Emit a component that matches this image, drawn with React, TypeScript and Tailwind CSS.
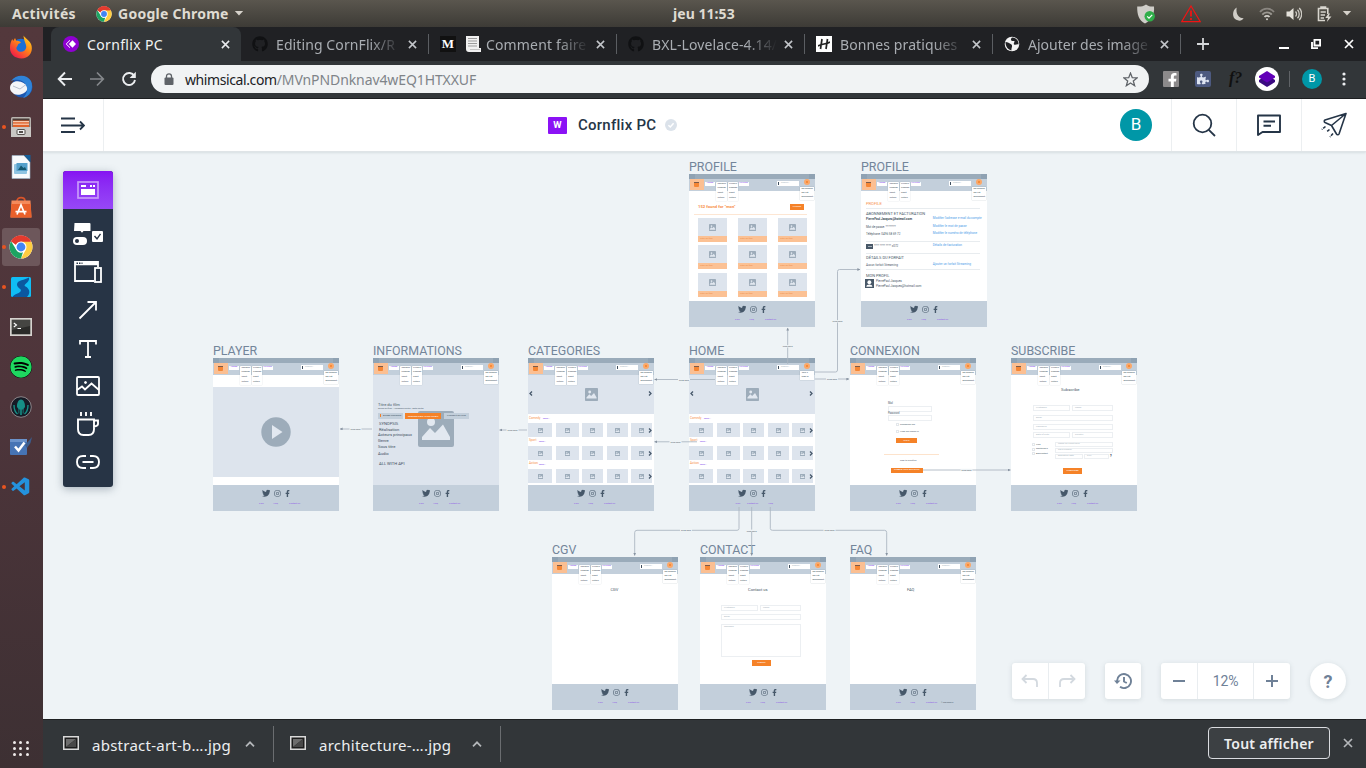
import React from "react";
import { FaTwitter, FaInstagram, FaFacebookF, FaGithub, FaSpotify, FaPuzzlePiece } from "react-icons/fa";
import { VscVscode } from "react-icons/vsc";

const ubuntu = "font-['Noto_Sans','Open_Sans',sans-serif]";
const din = "font-['Roboto',sans-serif]";

/* ---------- shared icons ---------- */

function ChromeLogo({ className }: { className: string }) {
  return (
    <svg viewBox="0 0 48 48" className={className}>
      <circle cx="24" cy="24" r="23" fill="#fff" />
      <path d="M24 24 L4.1 12.5 A23 23 0 0 1 43.9 12.5 Z" fill="#e33b2e" />
      <path d="M24 13 H44.2 A23 23 0 0 1 24 47 L33.5 29.5 Z" fill="#ffcd40" />
      <path d="M4.1 12.5 L14.5 29.5 A11 11 0 0 0 28 34 L24 47 A23 23 0 0 1 4.1 12.5Z" fill="#1da462" />
      <path d="M4.1 12.5 A23 23 0 0 1 44.2 13 H24 A11 11 0 0 0 14 20 Z" fill="#e33b2e" />
      <circle cx="24" cy="24" r="11" fill="#fff" />
      <circle cx="24" cy="24" r="8.8" fill="#4285f4" />
    </svg>
  );
}

function Cross({ className }: { className: string }) {
  return (
    <svg viewBox="0 0 10 10" className={className} fill="none" stroke="currentColor" strokeWidth="1.7">
      <path d="M1 1 L9 9 M9 1 L1 9" />
    </svg>
  );
}

function Caret() {
  return (
    <svg viewBox="0 0 10 6" className="h-[5px] w-[10px]" fill="#d6d2cb">
      <path d="M0 0H10L5 5.5Z" />
    </svg>
  );
}

/* ---------- desktop chrome ---------- */

function TopBar() {
  return (
    <div className={`relative flex h-[27px] shrink-0 items-center bg-linear-to-b from-[#5a564e] to-[#3d3b36] text-[14px] font-bold text-[#dfdbd2] ${ubuntu}`}>
      <span className="w-[64px] pl-3 whitespace-nowrap tracking-[0.35px]">Activités</span>
      <ChromeLogo className="ml-[32px] h-4 w-4" />
      <span className="ml-[6px] w-[116px] whitespace-nowrap tracking-[0.25px]">Google Chrome</span>
      <Caret />
      <span className="absolute top-[3px] left-[673px] whitespace-nowrap tracking-[0.05px]">jeu 11:53</span>
      <div className="ml-auto flex items-center">
        <svg viewBox="0 0 20 20" className="mr-[25px] h-5 w-5">
          <path d="M10 0.5 C7 2.5 4 2.8 1.2 2.5 C1 11 3 16.5 9 19.5 C15 16.5 18.8 11 18 2.5 C15 2.8 13 2.5 10 0.5Z" fill="#cfcdc8" />
          <circle cx="13.7" cy="12.3" r="5.2" fill="#2fae49" />
          <path d="M11.2 12.3 L13 14.1 L16.2 10.8" fill="none" stroke="#fff" strokeWidth="1.2" />
        </svg>
        <svg viewBox="0 0 20 18" className="mr-[31px] h-[18px] w-5" fill="none" stroke="#f01414">
          <path d="M10 1 L19.3 16.7 H0.7 Z" strokeWidth="1.2" />
          <path d="M10 5.5 V11.5 M10 13 V15" strokeWidth="1.8" />
        </svg>
        <svg viewBox="0 0 14 16" className="mr-[14px] h-4 w-[13px]" fill="#d0cdc7">
          <path d="M5 1 C0 4 0 12 4.5 14.3 C8 16 11 15 12.5 12.5 C7 12.5 4 8 5 1Z" />
        </svg>
        <svg viewBox="0 0 16 14" className="mr-[11px] h-[14px] w-4" fill="none" stroke="#d0cdc7" strokeWidth="1.8">
          <path d="M1 5 A9 9 0 0 1 15 5" opacity=".45" />
          <path d="M3.3 7.6 A6 6 0 0 1 12.7 7.6" opacity=".6" />
          <path d="M5.5 10 A3.3 3.3 0 0 1 10.5 10" />
          <circle cx="8" cy="12.3" r="1" fill="#d0cdc7" stroke="none" />
        </svg>
        <svg viewBox="0 0 16 14" className="mr-[15px] h-[14px] w-4">
          <path d="M0.5 4.5 H3.5 L7.5 1 V13 L3.5 9.5 H0.5Z" fill="#e4e1da" />
          <path d="M9.5 4.5 A3.5 3.5 0 0 1 9.5 9.5 M11.5 2.8 A6 6 0 0 1 11.5 11.2 M13.2 1 A8.5 8.5 0 0 1 13.2 13" fill="none" stroke="#cfccc5" strokeWidth="1.3" />
        </svg>
        <svg viewBox="0 0 15 16" className="mr-[10px] h-4 w-[15px]" fill="none" stroke="#d8d5ce" strokeWidth="1.6">
          <path d="M8 14.5 H1.5 V2.5 H10.8 V8 M4 2.5 V1 H8.5 V2.5 M3.6 6 H8.8 M3.6 9 H8 M3.6 12 H7" />
          <path d="M11.5 7.5 L8.3 12 H11 L9.8 16 L14.5 10.6 H11.6 L13 7.5Z" fill="#d8d5ce" stroke="none" />
        </svg>
        <div className="mr-[14px]"><Caret /></div>
      </div>
    </div>
  );
}

function Firefox() {
  return (
    <svg viewBox="0 0 24 24" className="h-6 w-6">
      <defs>
        <linearGradient id="ffx" x1="1" y1="0" x2="0.2" y2="1">
          <stop offset="0" stopColor="#ffe226" />
          <stop offset=".45" stopColor="#ff8a16" />
          <stop offset="1" stopColor="#f0134d" />
        </linearGradient>
      </defs>
      <circle cx="12" cy="12.3" r="8.5" fill="#1a6fd6" />
      <path d="M14.5 .5 C16 3 20 5 22 9 C24.5 15 21.5 23.3 12.5 23.5 C5 23.5 .7 18.5 1 12.5 C1 9 2 6 3.3 4 L4.2 6 L6 3 L7.5 6 C9 5.5 10.5 6.2 12 7.2 C11 8.5 9.8 8.2 9 9.5 C8.7 11.5 6.8 12.2 7.5 14 C9.5 18.5 16.5 17.5 17.2 12.5 C17.6 9 15 7 14.5 .5Z" fill="url(#ffx)" />
    </svg>
  );
}

function Thunderbird() {
  return (
    <svg viewBox="0 0 24 24" className="h-6 w-6">
      <circle cx="13" cy="12" r="10.5" fill="#1c57b0" />
      <path d="M2 6 C7 -1 18 -1 22 6 C25 13 21 22 14 23 C20 18 19 9 13 6 C9 4 5 5 2 6Z" fill="#2f83d8" />
      <path d="M1 13 C1 8 6 5.5 10 6.5 C15 7 19 11 18 15 C16 19 9 21 5 19 C3 17 1 16 1 13Z" fill="#f4f5f8" />
      <path d="M4 11 L11 14 L17 9.5" fill="none" stroke="#b9c1cf" strokeWidth="1" />
    </svg>
  );
}

function Files() {
  return (
    <svg viewBox="0 0 22 22" className="h-[22px] w-[22px]">
      <rect x="1" y="1" width="20" height="20" rx="1.5" fill="#b9b5b0" />
      <rect x="2.5" y="2.5" width="17" height="9" fill="#4b3d38" />
      <path d="M3 4.5 H19 V11 H3Z" fill="#e0622a" />
      <path d="M3 5.7 H19 M3 8.2 H19" stroke="#fbe3cf" strokeWidth="1" />
      <rect x="1" y="11" width="20" height="10" fill="#c9c7c4" />
      <rect x="7" y="13.5" width="8" height="5" rx="1" fill="#eee" stroke="#55504d" strokeWidth="1" />
      <rect x="9" y="15" width="4" height="2" fill="#55504d" />
    </svg>
  );
}

function Writer() {
  return (
    <svg viewBox="0 0 20 24" className="h-6 w-5">
      <path d="M1 .5 H13 L19 7 V23.5 H1Z" fill="#f7fafc" stroke="#9bb6c9" strokeWidth=".6" />
      <path d="M13 0 H19.5 V7.5Z" fill="#16609a" />
      <rect x="3" y="9" width="13" height="10" rx="1" fill="#8fc4e2" />
      <rect x="5.5" y="8" width="11" height="8" fill="#54a0cb" />
      <path d="M7 15 L10 10.5 L12.5 13 L14 12 L15.5 15Z" fill="#14576f" />
    </svg>
  );
}

function SoftwareCenter() {
  return (
    <svg viewBox="0 0 22 22" className="h-[22px] w-[22px]">
      <path d="M7 5 C7 .5 15 .5 15 5" fill="none" stroke="#d8542a" strokeWidth="1.6" />
      <path d="M1.5 4.5 H20.5 L21.5 21.5 H.5Z" fill="#f58a5b" />
      <path d="M1.4 8 L.5 21.5 H21.5 L20.6 8 Z" fill="#e9602b" />
      <path d="M7 18.5 L11 9 L15 18.5 M5.5 15.7 H16.5" fill="none" stroke="#fff" strokeWidth="1.7" />
    </svg>
  );
}

function River() {
  return (
    <svg viewBox="0 0 20 20" className="h-5 w-5">
      <rect width="20" height="20" rx="1.5" fill="#10bdf5" />
      <path d="M18 .5 C14 3 6 3 6 7.500 C6 11.500 11.500 11.500 9.500 14.500 C7.500 17 3 17 1.500 20 H16 C20 16 18.500 11.500 14.500 9.500 C11 7.500 19 6 18 .5Z" fill="#0b57a0" />
    </svg>
  );
}

function Terminal() {
  return (
    <svg viewBox="0 0 22 18" className="h-[18px] w-[22px]">
      <rect width="22" height="18" fill="#d6d3cf" />
      <rect x="1.7" y="1.7" width="18.6" height="14.6" fill="#2b2b29" />
      <path d="M2 2H20V8L2 12Z" fill="#454542" />
      <path d="M3.8 5 L6.5 7 L3.8 9 M7.5 10.5 H11" fill="none" stroke="#fff" strokeWidth="1.1" />
    </svg>
  );
}

function Kraken() {
  return (
    <svg viewBox="0 0 22 22" className="h-[22px] w-[22px]">
      <circle cx="11" cy="11" r="10.3" fill="#161b26" stroke="#8b8488" strokeWidth="1" />
      <path d="M11 3.5 C14 3.5 15.3 8 15 11 L13.5 13 V17.5 H12.7 V13.5 H11.8 V19 H10.2 V13.5 H9.3 V17.5 H8.5 V13 L7 11 C6.7 8 8 3.5 11 3.5Z" fill="#168f86" />
      <path d="M4 9 C4 13 5 16 7.5 18 M18 9 C18 13 17 16 14.5 18" fill="none" stroke="#168f86" strokeWidth="1.4" />
    </svg>
  );
}

function Tasks() {
  return (
    <svg viewBox="0 0 24 22" className="h-[22px] w-6">
      <rect x="1" y="3" width="17" height="16" rx="1" fill="#4674b5" />
      <rect x="1" y="3" width="17" height="3" fill="#6b93cb" />
      <path d="M16 9 L23 1 L21.5 7 L18 12Z" fill="#3c5c8c" />
      <path d="M6 10.5 L9.5 14.5 L15.5 6.5" fill="none" stroke="#fff" strokeWidth="2.5" />
    </svg>
  );
}

const dock: { node: React.ReactNode; running?: boolean; active?: boolean }[] = [
  { node: <Firefox /> },
  { node: <Thunderbird /> },
  { node: <Files />, running: true },
  { node: <Writer /> },
  { node: <SoftwareCenter /> },
  { node: <ChromeLogo className="h-6 w-6" />, running: true, active: true },
  { node: <River />, running: true },
  { node: <Terminal /> },
  { node: <FaSpotify className="h-[22px] w-[22px] rounded-full bg-black text-[#1ed760]" /> },
  { node: <Kraken /> },
  { node: <Tasks /> },
  { node: <VscVscode className="h-[22px] w-[22px] text-[#2492dd]" />, running: true },
];

function Dock() {
  return (
    <aside className="flex w-[43px] shrink-0 flex-col bg-linear-to-b from-[#53383c] via-[#4e353b] to-[#3d3033]">
      {dock.map((d, i) => (
        <div key={i} className="relative flex h-10 items-center pl-[2px]">
          {d.running && <span className="absolute left-[2px] z-10 h-[4px] w-[4px] rounded-full bg-[#e95420]" />}
          <div className={`flex h-[38px] w-[38px] items-center justify-center rounded-[3px] ${d.active ? "bg-[#6d575b]" : ""}`}>{d.node}</div>
        </div>
      ))}
      <div className="mt-auto mb-[12px] ml-[13px] grid w-4 grid-cols-3 gap-[3px]">
        {Array.from({ length: 9 }, (_, i) => (
          <span key={i} className="h-[3px] w-[3px] rounded-full bg-[#efeaea]" />
        ))}
      </div>
    </aside>
  );
}

/* ---------- browser chrome ---------- */

const fade = "[mask-image:linear-gradient(to_right,black_75%,transparent)]";

const Github = () => <FaGithub className="h-4 w-4 text-[#101113]" />;

const tabs: { icon: React.ReactNode; title: React.ReactNode; tracking: string }[] = [
  { icon: <Github />, title: "Editing CornFlix/R", tracking: "tracking-[0.1px]" },
  {
    icon: <span className="flex h-4 w-4 items-center justify-center bg-[#111] font-['Liberation_Serif',serif] text-[13px] font-bold text-white">M</span>,
    title: (
      <span className="flex items-center">
        <svg viewBox="0 0 16 16" className="mr-[5px] ml-[1px] h-4 w-4 shrink-0">
          <path d="M1 0 H14 V12 H16 V16 H4 C2 16 1 15 1 13Z" fill="#f0f0f0" />
          <path d="M3 2.5 H12 M3 5 H12 M3 7.5 H12 M3 10 H12" stroke="#9b9b9b" strokeWidth="1" />
          <path d="M5 13.5 H15" stroke="#c4c4c4" />
        </svg>
        Comment faire
      </span>
    ),
    tracking: "tracking-[0.15px]",
  },
  { icon: <Github />, title: "BXL-Lovelace-4.14/", tracking: "tracking-[0.1px]" },
  {
    icon: (
      <span className="flex h-4 w-4 items-center justify-center bg-white">
        <svg viewBox="0 0 12 12" className="h-3 w-3" fill="none" stroke="#222" strokeWidth="1.7">
          <path d="M4 1 L2.5 11 M9.5 1 L8 11 M0 8 C5 5 7 7 12 4" />
        </svg>
      </span>
    ),
    title: "Bonnes pratiques",
    tracking: "tracking-[0.1px]",
  },
  {
    icon: (
      <svg viewBox="0 0 16 16" className="h-4 w-4">
        <circle cx="8" cy="8" r="7.3" fill="#f4f4f4" />
        <path d="M1.5 6 C4 6 5 7 7.500 8.500 C9 10 7 12 7.500 14.500 C3.500 13.500 1.500 10 1.5 6Z M8 1.500 C6 3.500 7 5 9.500 5 C12 5 9 7 10 8.500 C12 9.500 13 7.500 14.500 8.500 C15 5 12 1.500 8 1.500Z" fill="#202124" />
      </svg>
    ),
    title: "Ajouter des image",
    tracking: "tracking-[0px]",
  },
];

function TabStrip() {
  return (
    <div className={`flex h-[34px] shrink-0 bg-[#202124] text-[14px] ${ubuntu}`}>
      <div className="ml-2 flex w-[190px] items-center rounded-t-[8px] bg-[#323639] pr-[11px] pl-3">
        <svg viewBox="0 0 16 16" className="h-4 w-4">
          <circle cx="8" cy="8" r="8" fill="#8f00d2" />
          <path d="M9.5 4.2 L13 8 L9.5 11.8 L5.8 8Z" fill="#fff" />
          <path d="M7 4.3 L3.2 8 L7 11.7" fill="none" stroke="#fff" strokeWidth="1" />
        </svg>
        <span className="ml-2 flex-1 whitespace-nowrap text-[#f1f3f4] tracking-[0.35px]">Cornflix PC</span>
        <Cross className="h-[9px] w-[9px] text-[#e8eaed]" />
      </div>
      {tabs.map((t, i) => (
        <div key={i} className="flex w-[188px] items-center pl-[11px]">
          <span className="shrink-0">{t.icon}</span>
          <span className={`ml-2 w-[125px] whitespace-nowrap text-[#a9adb2] ${t.tracking} ${fade}`}>{t.title}</span>
          <Cross className="ml-[7px] h-[9px] w-[9px] shrink-0 text-[#c3c6ca]" />
          <span className="ml-auto h-5 w-px bg-[#5b5e62]" />
        </div>
      ))}
      <div className="flex flex-1 items-center pr-[12px] pl-[16px] text-[#d5d7da]">
        <svg viewBox="0 0 12 12" className="h-3 w-3" stroke="currentColor" strokeWidth="1.8"><path d="M6 0V12M0 6H12" /></svg>
        <svg viewBox="0 0 10 10" className="ml-auto h-[10px] w-[10px]"><path d="M0 9H10" stroke="#fff" strokeWidth="2" /></svg>
        <svg viewBox="0 0 10 10" className="ml-[22px] h-[10px] w-[10px]" fill="none" stroke="#fff" strokeWidth="1.9">
          <path d="M3.5 .9 H9.1 V6.5 H3.5Z M1 3 V9.1 H7" />
        </svg>
        <Cross className="ml-[23px] h-[10px] w-[10px] text-white" />
      </div>
    </div>
  );
}

function AddressBar() {
  return (
    <div className={`flex h-[38px] shrink-0 items-center border-b border-[#1e2022] bg-[#323639] pb-[1px] ${ubuntu}`}>
      <svg viewBox="0 0 16 16" className="ml-[14px] h-4 w-4" fill="none" stroke="#eceef0" strokeWidth="1.9"><path d="M15 8H2M8 1.5L1.7 8L8 14.5" /></svg>
      <svg viewBox="0 0 16 16" className="ml-[16px] h-4 w-4" fill="none" stroke="#85888c" strokeWidth="1.7"><path d="M1 8H14M8 1.5L14.3 8L8 14.5" /></svg>
      <svg viewBox="0 0 16 16" className="ml-[16px] h-4 w-4" fill="none" stroke="#eceef0" strokeWidth="1.9">
        <path d="M13.3 5 A6 6 0 1 0 14 9" />
        <path d="M14.8 .8 V7 H8.6Z" fill="#eceef0" stroke="none" />
      </svg>
      <div className="ml-[14px] flex h-7 w-[998px] items-center rounded-full bg-[#f1f3f4] text-[14px]">
        <svg viewBox="0 0 10 12" className="ml-[13px] h-3 w-[10px]">
          <rect x=".5" y="4.5" width="9" height="7.5" rx="1" fill="#5f6368" />
          <path d="M2.5 5 V3.3 A2.5 2.5 0 0 1 7.5 3.3 V5" fill="none" stroke="#5f6368" strokeWidth="1.3" />
        </svg>
        <span className="ml-[11px] whitespace-nowrap text-[#7f8489] tracking-[-0.1px]"><span className="text-[#202124] tracking-[-0.4px]">whimsical.com</span>/MVnPNDnknav4wEQ1HTXXUF</span>
        <svg viewBox="0 0 16 16" className="mr-[11px] ml-auto h-[15px] w-[15px]" fill="none" stroke="#5f6368" strokeWidth="1.4">
          <path d="M8 1.2 L9.9 6 L15 6.3 L11 9.6 L12.4 14.6 L8 11.8 L3.6 14.6 L5 9.6 L1 6.3 L6.1 6Z" />
        </svg>
      </div>
      <span className="relative ml-[14px] flex h-4 w-4 justify-end overflow-hidden rounded-[1px] bg-[#8c8a8b]"><FaFacebookF className="mt-[2px] mr-[1px] h-[15px] w-[11px] text-white" /></span>
      <span className="ml-4 flex h-4 w-4 items-center justify-center rounded-[2px] bg-[#4d5a80]"><FaPuzzlePiece className="h-3 w-3 text-[#dfe5f2]" /></span>
      <span className="ml-[18px] w-[14px] pb-[2px] font-['Liberation_Serif',serif] text-[16px] leading-none font-bold whitespace-nowrap text-[#101010] italic">f?</span>
      <span className="ml-[12px] flex h-6 w-6 items-center justify-center rounded-full bg-white">
        <svg viewBox="0 0 16 16" className="h-4 w-4"><path d="M0 9 L8 4 L16 9 V11 L8 16 L0 11Z" fill="#3a0a80" /><path d="M8 0 L16 5 V6.5 L8 11.5 L0 6.5 V5Z" fill="#6200b8" /></svg>
      </span>
      <span className="ml-[10px] h-4 w-px bg-[#606367]" />
      <span className={`ml-3 flex h-5 w-5 items-center justify-center rounded-full bg-[#0097a7] text-[11px] text-white ${din}`}>B</span>
      <svg viewBox="0 0 4 14" className="ml-[20px] h-[14px] w-1" fill="#eceef0"><circle cx="2" cy="2" r="1.6" /><circle cx="2" cy="7" r="1.6" /><circle cx="2" cy="12" r="1.6" /></svg>
    </div>
  );
}

/* ---------- whiteboard header ---------- */

function HeaderCell({ children }: { children: React.ReactNode }) {
  return <div className="flex h-full w-[65px] items-center justify-center border-l border-[#eceff1]">{children}</div>;
}

function AppHeader() {
  return (
    <header className="relative z-10 flex h-[53px] shrink-0 items-center border-b border-[#dfe4e7] bg-white shadow-[0_1px_2px_rgba(60,80,90,0.12)]">
      <div className="flex h-full w-[61px] items-center border-r border-[#eceff1] pl-[18px]">
        <svg viewBox="0 0 24 16" className="h-4 w-6" fill="none" stroke="#253547" strokeWidth="1.8"><path d="M0 1.500H14M0 8.500H23M0 15H14M19 4.500L23 8.500L19 12.500" /></svg>
      </div>
      <div className="flex flex-1 items-center pl-[444px]">
        <span className={`flex h-[17px] w-[19px] items-center justify-center rounded-[1px] bg-[#8b12f5] text-[9.5px] font-bold text-white ${din}`}>W</span>
        <span className={`ml-[11px] w-[79px] text-[15px] font-medium whitespace-nowrap text-[#253547] tracking-[0.25px] ${din}`}>Cornflix PC</span>
        <svg viewBox="0 0 12 12" className="ml-[8px] h-3 w-3"><circle cx="6" cy="6" r="6" fill="#dbe2ea" /><path d="M3.4 6.2 L5.3 8 L8.6 4.2" fill="none" stroke="#fff" strokeWidth="1.5" /></svg>
      </div>
      <span className={`mr-[19px] flex h-8 w-8 items-center justify-center rounded-full bg-[#0097a7] text-[17px] text-white ${din}`}>B</span>
      <HeaderCell>
        <svg viewBox="0 0 24 24" className="h-6 w-6" fill="none" stroke="#253547" strokeWidth="1.8"><circle cx="10.5" cy="10.5" r="8.8" /><path d="M16.8 16.8L23 23" /></svg>
      </HeaderCell>
      <HeaderCell>
        <svg viewBox="0 0 24 22" className="h-[22px] w-6" fill="none" stroke="#253547" strokeWidth="1.9" strokeLinejoin="round"><path d="M1 1.5 H23 V18 H5.5 L1 21Z M6.5 7.5H18M6.5 11.7H14" /></svg>
      </HeaderCell>
      <HeaderCell>
        <svg viewBox="0 0 26 26" className="h-[26px] w-[26px]" fill="none" stroke="#253547" strokeWidth="1.6" strokeLinejoin="round">
          <path d="M25 1.500 L4 8 C3 8.500 3 10 4 10.500 L10.500 13.500 L15.500 22 C16 23 17.500 23 18 22Z M25 1.500 L10.500 13.500" />
          <path d="M4.5 14.5 L.8 17.5 M8.500 17.500 L5.5 20 M12 21.500 L9 25" strokeDasharray="3 1" />
        </svg>
      </HeaderCell>
    </header>
  );
}

/* ---------- wireframe thumbnails placed on the canvas ---------- */

type Pos = { x: number; y: number };

/* y is the vertical centre of the text line */
function Txt({ x, y, s = 3.4, c = "text-[#4a5a69]", children }: Pos & { s?: number; c?: string; children: React.ReactNode }) {
  return (
    <span className={`absolute -translate-y-1/2 leading-none whitespace-nowrap ${c}`} style={{ left: x, top: y, fontSize: s }}>
      {children}
    </span>
  );
}

function Box({ x, y, w, h, c = "bg-[#dde4ed]", children }: Pos & { w: number; h: number; c?: string; children?: React.ReactNode }) {
  return (
    <div className={`absolute flex items-center justify-center leading-none whitespace-nowrap ${c}`} style={{ left: x, top: y, width: w, height: h }}>
      {children}
    </div>
  );
}

function Pic({ className }: { className: string }) {
  return (
    <svg viewBox="0 0 36 36" className={className}>
      <rect width="36" height="36" rx="2" fill="#9dacba" />
      <circle cx="13" cy="11" r="4" fill="#e2e8f0" />
      <path d="M4 29 V26 L12 17 L17 22 L25 13.5 L32 26 V29Z" fill="#e2e8f0" />
    </svg>
  );
}

function Chevron({ x, y, left }: Pos & { left?: boolean }) {
  return (
    <Box x={x} y={y - 2.5} w={4} h={5} c="">
      <svg viewBox="0 0 4 5" className={`h-[5px] w-1 ${left ? "-scale-x-100" : ""}`} fill="none" stroke="#46586a" strokeWidth="1.3">
        <path d="M1 .5L3 2.500L1 4.500" />
      </svg>
    </Box>
  );
}

const orangeBtn = "bg-[#f58228] text-[2.3px] text-white";
const field = "bg-white border border-[#eceff2] !justify-start pl-[2px] text-[2.4px] text-[#a9b4be]";
const dropdown = "absolute top-[7.5px] flex flex-col justify-around rounded-[0.5px] bg-white pl-[1.5px] text-[2.3px] leading-none font-medium whitespace-nowrap text-[#56636f] shadow-[0_0_1px_rgba(60,80,100,0.45)]";

const Links = ({ kind }: { kind?: string }) => (
  <div className="font-medium text-[#9566e6]">
    <Txt x={kind === "home" ? 46.5 : 46} y={19} s={2.5} c="">CGV</Txt>
    <Txt x={kind === "home" ? 79.5 : 60.5} y={19} s={2.5} c="">FAQ</Txt>
    <Txt x={kind === "home" ? 58 : 76} y={19} s={2.3} c="">Contact us</Txt>
    {kind === "faq" && <Txt x={91} y={19} s={1.9}>© COPYRIGHT</Txt>}
  </div>
);

function Frame({ x, y, title, kind, children }: Pos & { title: string; kind?: string; children?: React.ReactNode }) {
  return (
    <section className={`absolute ${din}`} style={{ left: x - 43, top: y - 152 }}>
      <h3 className="absolute -top-[15px] left-0 text-[12.4px] leading-[16px] whitespace-nowrap text-[#73859a]">{title}</h3>
      <div className="relative flex h-[153px] w-[126px] flex-col overflow-hidden bg-white">
        <div className="h-[4.7px] shrink-0 border-x-[6px] border-[#8fa2b3] bg-[#9aabba]" />
        <div className="h-[12px] shrink-0 bg-[#c3cfdb]" />
        <div className="flex-1" />
        <div className="relative h-[26px] shrink-0 bg-[#c3cfdb]">
          <div className="flex items-center pt-[4px] pl-[48.5px] text-[#46586a]">
            <FaTwitter className="h-[8.5px] w-[8.5px]" />
            <FaInstagram className="ml-[3.5px] h-[7px] w-[7px]" />
            <FaFacebookF className="ml-[4.500px] h-[7px] w-[5px]" />
          </div>
          <Links kind={kind} />
        </div>
        {children}
        <Box x={1} y={4.7} w={13.5} h={11.3} c="bg-[#fbbf92]"><span className="h-[5px] w-[5px] rounded-b-[1px] border-t border-[#7b5b4a] bg-[#f58634]" /></Box>
        <Box x={16} y={7.6} w={10} h={4} c="bg-white text-[2.3px] font-medium text-[#8b54ee]">HOME</Box>
        <div className={`${dropdown} left-[27px] h-[19px] w-[10.5px]`}><span>SERIES▾</span><span>Comedy</span><span>Sport</span><span>Action</span></div>
        <div className={`${dropdown} left-[38.5px] h-[19px] w-[10.5px]`}><span>FILMS ▾</span><span>Comedy</span><span>Sport</span><span>Action</span></div>
        <Box x={49.5} y={7.6} w={10.5} h={4} c="bg-white text-[2.3px] font-medium text-[#8b54ee]">PLAYER</Box>
        <Box x={87.5} y={7.4} w={22} h={4.2} c="bg-white text-[2.4px] text-[#a9b4be] !justify-start pl-[1.5px]"><span className="mr-[2px] h-[2.4px] w-[1px] bg-[#3f4f5f]" />Search...</Box>
        <Box x={115} y={5.4} w={5.6} h={5.6} c="rounded-full bg-[#fba869]"><span className="h-[2px] w-[2px] rounded-full bg-[#f58228]" /></Box>
        <div className="absolute top-[12.5px] left-[111px] flex w-[14px] flex-col gap-[2px] bg-white py-[1.3px] pl-[1.5px] text-[2.3px] leading-none font-medium whitespace-nowrap text-[#4a5a69] shadow-[0_0_1px_rgba(60,80,100,0.45)]">
          {kind === "home" ? <><span>Join ▸</span><span>Sign in</span></> : <><span>My profile ▸</span><span>My list</span><span>Disconnect</span></>}
        </div>
      </div>
    </section>
  );
}

function Results() {
  return (
    <>
      <Txt x={9} y={32.9} s={4.2} c="font-bold text-[#f7914a]">152 found for "mon"</Txt>
      <Box x={101} y={30.3} w={14} h={5.4} c={orangeBtn}>FILTRER</Box>
      <Box x={5} y={40} w={113} h={1} c="bg-[#fde6d3]" />
      {[44, 71, 99].map((y) =>
        [9, 49, 89].map((x) => (
          <React.Fragment key={`${x}-${y}`}>
            <Box x={x} y={y} w={28.5} h={19}><Pic className="h-[7px] w-[7px]" /></Box>
            <Box x={x} y={y + 18} w={28.5} h={5.6} c="bg-[#fbc194] text-[2.4px] text-[#ee8c46] !justify-start pl-[2px]">Titre du film</Box>
          </React.Fragment>
        )),
      )}
    </>
  );
}

function Profile() {
  const blue = "text-[#4a9be8]";
  return (
    <>
      <Txt x={5} y={30} s={4.1} c="text-[#f7914a]">PROFILE</Txt>
      {[34, 67, 79, 95].map((y) => <Box key={y} x={5} y={y} w={114} h={1} c="bg-[#e8ecef]" />)}
      <Txt x={5} y={40} s={4}>ABONNEMENT ET FACTURATION</Txt>
      <Txt x={5} y={45.4} s={3} c="font-bold text-[#3c4b59]">PierrePaul.Jacques@hotmail.com</Txt>
      <Txt x={5} y={52.7} s={3}>Mot de passe: ********</Txt>
      <Txt x={5} y={59.7} s={3}>Téléphone: 0496 58 69 72</Txt>
      <Txt x={71.7} y={45.4} s={3.1} c={blue}>Modifier l'adresse e-mail du compte</Txt>
      <Txt x={71.7} y={52.7} s={3.1} c={blue}>Modifier le mot de passe</Txt>
      <Txt x={71.7} y={59.7} s={3.1} c={blue}>Modifier le numéro de téléphone</Txt>
      <Box x={5} y={70} w={7} h={5} c="bg-[#485868]"><span className="h-[1px] w-[4px] bg-[#a4afba]" /></Box>
      <Txt x={13} y={71.5} s={3}>**** **** **** x072</Txt>
      <Txt x={71.7} y={71.5} s={3.1} c={blue}>Détails de facturation</Txt>
      <Txt x={5} y={84} s={4}>DÉTAILS DU FORFAIT</Txt>
      <Txt x={5} y={90.5} s={3}>Aucun forfait Streaming</Txt>
      <Txt x={71.7} y={90.5} s={3.1} c={blue}>Ajouter un forfait Streaming</Txt>
      <Txt x={5} y={102} s={4}>MON PROFIL</Txt>
      <Box x={4.3} y={105.3} w={8.7} h={8.7} c="bg-[#485868]">
        <svg viewBox="0 0 10 10" className="h-full w-full" fill="#fff"><circle cx="5" cy="3.7" r="2.2" /><path d="M1.5 9 C1.5 5.5 8.5 5.5 8.5 9Z" /></svg>
      </Box>
      <Txt x={15} y={107} s={3}>PierrePaul.Jacques</Txt>
      <Txt x={15} y={112} s={3}>PierrePaul.Jacques@hotmail.com</Txt>
    </>
  );
}

function Player() {
  return (
    <Box x={0} y={29} w={126} h={90} c="bg-[#dde4ed]">
      <svg viewBox="0 0 30 30" className="h-[30px] w-[30px]"><circle cx="15" cy="15" r="14.7" fill="#9dacba" /><path d="M11 8 L21.5 15 L11 22Z" fill="#e2e8f0" /></svg>
    </Box>
  );
}

function Informations() {
  return (
    <>
      <Box x={0} y={16.7} w={126} h={110} />
      <Box x={44.7} y={53} w={36} h={36.3} c=""><Pic className="h-9 w-9" /></Box>
      <Txt x={5} y={47.2} s={4.1}>Titre du film</Txt>
      <Txt x={5} y={50.9} s={2.4}>durée du film – comédie sortie : date sortie</Txt>
      <Box x={5} y={55} w={24.7} h={5.7} c="bg-[#c3cfdb] text-[2.2px] font-medium text-[#4a5a69]"><span className="mr-[2px] h-[3px] w-[1.500px] bg-[#f58228]" />BANDE-ANNONCE</Box>
      <Box x={32} y={55} w={36.3} h={5.7} c="bg-[#f58228] text-[2px] text-white">REGARDER DANS VOTRE FORFAIT</Box>
      <Box x={71} y={55} w={25} h={5.7} c="bg-[#c3cfdb] text-[1.900px] font-medium text-[#4a5a69]">AJOUTER À MA LISTE</Box>
      {([["SYNOPSIS", 66, 6], ["Réalisation", 71.7, 6], ["Acteurs principaux", 77, 5], ["Genre", 82.7, 5], ["Sous titre", 89, 5], ["Audio", 96, 5], ["ALL WITH API", 106, 6]] as [string, number, number][]).map(([t, y, x]) => (
        <Txt key={t} x={x} y={y} s={4.100} c="text-[#3f4f5e]">{t}</Txt>
      ))}
    </>
  );
}

function Catalogue() {
  const cards = [[0, 24.3], [28, 23], [54, 21], [79, 21], [103, 21]];
  return (
    <>
      <Box x={0} y={16.7} w={126} h={39.3}><Pic className="h-[13px] w-[13px]" /></Box>
      <Chevron x={1} y={35} left />
      <Chevron x={120} y={35} />
      {([["Comedy", 61, 65, 15], ["Sport", 82.7, 88, 11], ["Action", 105.7, 111, 11]] as [string, number, number, number][]).map(([label, ly, cy, mx], i) => (
        <React.Fragment key={label}>
          <Txt x={1} y={ly} s={3.1} c="text-[#f7914a]">{label}</Txt>
          <Txt x={mx} y={ly + (i ? 1 : 0)} s={2.3} c="font-medium text-[#8b54ee]">more...</Txt>
          {cards.map(([x, w]) => (
            <Box key={x} x={x} y={cy} w={w} h={14}><Pic className="h-[5px] w-[5px]" /></Box>
          ))}
          <Chevron x={120} y={cy + 7} />
        </React.Fragment>
      ))}
    </>
  );
}

function Check({ x, y, children }: Pos & { children: string }) {
  return (
    <>
      <Box x={x} y={y - 1.5} w={3} h={3} c="border border-[#e3e7eb] bg-white" />
      <Txt x={x + 4} y={y} s={2.3}>{children}</Txt>
    </>
  );
}

function Login() {
  return (
    <>
      <Txt x={38} y={46} s={2.6}>Mail</Txt>
      <Box x={38} y={47.5} w={44} h={6} c={field} />
      <Txt x={38} y={56} s={2.6}>Password</Txt>
      <Box x={38} y={57.3} w={44} h={6} c={field} />
      <Check x={46} y={66.7}>Remember me</Check>
      <Check x={46} y={73.7}>Keep me signed in</Check>
      <Box x={46} y={80} w={21} h={5.3} c={orangeBtn}>Log in</Box>
      <Box x={34} y={96} w={55} h={1} c="bg-[#fde3cc]" />
      <Txt x={50} y={102.7} s={2.3}>New to Cornflix?</Txt>
      <Box x={41} y={110} w={31.7} h={5.2} c={orangeBtn}>CREATE YOUR ACCOUNT</Box>
    </>
  );
}

function Subscribe() {
  return (
    <>
      <Txt x={50} y={32.3} s={4.2}>Subscribe</Txt>
      <Box x={22} y={47} w={37} h={6} c={field}>Firstname</Box>
      <Box x={61} y={47} w={40.7} h={6} c={field}>Name</Box>
      <Box x={22} y={57} w={79.7} h={6} c={field}>Email</Box>
      <Box x={22} y={66} w={79.7} h={6} c={field}>Password</Box>
      <Box x={22} y={74} w={37} h={6} c={field}>Date of birth</Box>
      <Box x={61} y={74} w={40.7} h={6} c={field}>Country</Box>
      <Check x={21} y={86.5}>Visa</Check>
      <Check x={21} y={91}>Mastercard</Check>
      <Check x={21} y={95.7}>Bancontact</Check>
      <Box x={44} y={84} w={57.7} h={5} c={field}>Name on credit card</Box>
      <Box x={44} y={90} w={57.7} h={5} c={field}>Card number</Box>
      <Box x={44} y={96} w={27.7} h={5} c={field}>Expiration date</Box>
      <Box x={73} y={96} w={25} h={5} c={field}>CVV</Box>
      <Txt x={99} y={98.5} s={3.4} c="font-bold text-[#33414e]">?</Txt>
      <Box x={52} y={110} w={19} h={5.8} c={orangeBtn}>SUBSCRIBE</Box>
    </>
  );
}

function Contact() {
  return (
    <>
      <Txt x={48} y={32.5} s={4.1}>Contact us</Txt>
      <Box x={21} y={48.3} w={37} h={5.6} c={field}>Firstname</Box>
      <Box x={60} y={48.3} w={40.7} h={5.6} c={field}>Name</Box>
      <Box x={21} y={57.3} w={79.7} h={5.8} c={field}>Email</Box>
      <Box x={21} y={67.3} w={79.7} h={32.7} c={`${field} !items-start pt-[1px]`}>Message</Box>
      <Box x={52} y={103} w={19} h={5.8} c={orangeBtn}>SUBMIT</Box>
    </>
  );
}

const connectors = [
  "M787.7 364 V328",
  "M815 372 H835.5 Q837.5 372 837.5 370 V271.5 Q837.5 269.5 839.5 269.5 H860",
  "M815 379 H849",
  "M715 379.5 H654.5",
  "M697 441.8 H654.5",
  "M527 430 H499.5",
  "M372 429 H340",
  "M923 470 H1010.5",
  "M739 507 V528.5 Q739 530.3 737 530.3 H637 Q634.7 530.3 634.7 532.5 V555.5",
  "M751.7 507 V555.5",
  "M770.3 507 V528.5 Q770.3 530.3 772.5 530.3 H884.5 Q886.7 530.3 886.7 532.5 V555.5",
];

const connectorLabels: [number, number][] = [
  [787.7, 346.3], [837.5, 321.3], [832, 378.7], [684, 379.7], [675.5, 441.8], [512.5, 430],
  [355.5, 429], [966.5, 470], [686, 530], [751.7, 530.8], [829.5, 530],
];

function Connectors() {
  return (
    <svg viewBox="43 152 1323 567" className="absolute top-0 left-0 h-[567px] w-[1323px]">
      <defs>
        <marker id="tip" markerWidth="4" markerHeight="4" refX="2.6" refY="1.4" orient="auto" markerUnits="userSpaceOnUse">
          <path d="M0 0L2.8 1.4L0 2.8Z" fill="#8793a1" />
        </marker>
      </defs>
      {connectors.map((d) => <path key={d} d={d} fill="none" stroke="#adb7c2" strokeWidth=".9" markerEnd="url(#tip)" />)}
      {connectorLabels.map(([x, y], i) => (
        <g key={i}>
          <rect x={x - 6} y={y - 1.2} width="12" height="2.4" fill="#eef3f6" />
          <text x={x} y={y + 0.8} fontSize="2.3" textAnchor="middle" fill="#5a6673" fontFamily="Roboto, sans-serif" fontWeight="500">click here</text>
        </g>
      ))}
    </svg>
  );
}

/* ---------- tool panel and canvas controls ---------- */

function ToolIcon({ h, children }: { h: string; children: React.ReactNode }) {
  return <div className={`flex ${h} items-center justify-center`}>{children}</div>;
}

function ToolPanel() {
  const svg = "fill-none stroke-white";
  return (
    <nav className="absolute top-[19px] left-5 flex h-[316px] w-[50px] flex-col overflow-hidden rounded-[3px] bg-[#273445] shadow-[0_2px_8px_rgba(40,60,80,0.35)]">
      <div className="flex h-[38px] items-center justify-center bg-linear-to-b from-[#8612f2] to-[#9747f7]">
        <svg viewBox="0 0 22 18" className="h-[18px] w-[22px]">
          <rect x="1" y="1" width="20" height="16" fill="none" stroke="#c79bfa" strokeWidth="1.7" />
          <path d="M4 4H9V6H4Z M13 4H15V6H13Z M16 4H18V6H16Z M4 8H18V14H4Z" fill="#fff" />
        </svg>
      </div>
      <ToolIcon h="h-[45px] pt-1">
        <svg viewBox="0 0 30 24" className="h-6 w-[30px]" fill="#fff">
          <path d="M1.5 1H16.5Q17.5 1 17.5 2V9H10.5L9 10.8L7.5 9H1Z" />
          <rect x="0" y="15" width="14" height="8" rx="4" /><circle cx="4" cy="19" r="2" fill="#273445" />
          <rect x="19" y="9" width="11" height="11" rx="1" /><path d="M21.5 14L24 16.8L27.5 11.8" fill="none" stroke="#273445" strokeWidth="1.4" />
        </svg>
      </ToolIcon>
      <ToolIcon h="h-[35px] pt-[1px]">
        <svg viewBox="0 0 28 22" className={`h-[22px] w-7 ${svg}`} strokeWidth="1.8">
          <path d="M20 20H1V1H24V6" /><path d="M1 2.5H24" strokeWidth="3.4" /><path d="M2.5 2.3H8.5" stroke="#273445" strokeWidth="1.5" strokeDasharray="1.5 1" />
          <rect x="21" y="7" width="6" height="14" />
        </svg>
      </ToolIcon>
      <ToolIcon h="h-[42px]"><svg viewBox="0 0 20 20" className={`h-5 w-5 ${svg}`} strokeWidth="1.8"><path d="M1.5 18.5L18 2M9.5 2H18V10.5" /></svg></ToolIcon>
      <ToolIcon h="h-[35px]"><svg viewBox="0 0 18 18" className={`h-[18px] w-[18px] ${svg}`} strokeWidth="1.8"><path d="M1 4.5V1H17V4.5M9 1V17M6 17H12" /></svg></ToolIcon>
      <ToolIcon h="h-[40px]">
        <svg viewBox="0 0 24 20" className={`h-5 w-6 ${svg}`} strokeWidth="1.8"><rect x="1" y="1" width="22" height="18" rx="1" /><path d="M1 14L6 10.5L9 13.5L15.5 7.5L23 14" /><circle cx="9.5" cy="6.5" r="1" fill="#fff" strokeWidth="1" /></svg>
      </ToolIcon>
      <ToolIcon h="h-[36px]">
        <svg viewBox="0 0 24 24" className={`h-6 w-6 ${svg}`} strokeWidth="1.9"><path d="M2 7.5H18V17Q18 23 12.5 23H7.5Q2 23 2 17Z M18 8.5H22V12Q22 14 18 14.5M5 0V4M10 0V4M15 0V4" /></svg>
      </ToolIcon>
      <ToolIcon h="h-[39px]">
        <svg viewBox="0 0 24 14" className={`h-[14px] w-6 ${svg}`} strokeWidth="1.9"><path d="M10 1H7Q1 1 1 7Q1 13 7 13H10M14 1H17Q23 1 23 7Q23 13 17 13H14M6.5 7H17.5" /></svg>
      </ToolIcon>
    </nav>
  );
}

function Controls() {
  const group = "flex h-9 items-center rounded-[3px] bg-white shadow-[0_1px_5px_rgba(60,80,90,0.15)]";
  const cell = "flex h-full w-9 items-center justify-center";
  return (
    <div className={`absolute right-5 bottom-5 flex gap-5 text-[#6f8197] ${din}`}>
      <div className={group}>
        <span className={cell}><svg viewBox="0 0 18 14" className="h-[14px] w-[18px]" fill="none" stroke="#d3d9df" strokeWidth="1.8"><path d="M5.5 1L1.5 5L5.5 9M1.5 5H12Q16 5 16 9V13" /></svg></span>
        <span className="h-full w-px bg-[#e9edf0]" />
        <span className={cell}><svg viewBox="0 0 18 14" className="h-[14px] w-[18px]" fill="none" stroke="#d3d9df" strokeWidth="1.8"><path d="M12.5 1L16.5 5L12.5 9M16.5 5H6Q2 5 2 9V13" /></svg></span>
      </div>
      <div className={group}>
        <span className={cell}><svg viewBox="0 0 18 16" className="h-4 w-[18px]" fill="none" stroke="currentColor" strokeWidth="1.9"><path d="M3 8A7 7 0 1 1 6 13.8M10 4V8.5L12.8 10" /><path d="M0 7.5H6.5L3 11Z" fill="currentColor" stroke="none" /></svg></span>
      </div>
      <div className={group}>
        <span className={cell}><span className="h-[2px] w-3 bg-[#6f8197]" /></span>
        <span className="flex h-full w-[57px] items-center justify-center border-x border-[#e9edf0] text-[14px] tracking-[-0.2px]">12%</span>
        <span className={cell}><svg viewBox="0 0 12 12" className="h-3 w-3" stroke="currentColor" strokeWidth="2"><path d="M6 0V12M0 6H12" /></svg></span>
      </div>
      <div className="flex h-9 w-9 items-center justify-center rounded-full bg-white text-[18px] font-bold shadow-[0_1px_5px_rgba(60,80,90,0.15)]">?</div>
    </div>
  );
}

function Canvas() {
  return (
    <main className="relative min-h-0 flex-1 overflow-hidden bg-[#eef3f6]">
      <Frame x={689} y={174} title="PROFILE"><Results /></Frame>
      <Frame x={861} y={174} title="PROFILE"><Profile /></Frame>
      <Frame x={213} y={358} title="PLAYER"><Player /></Frame>
      <Frame x={373} y={358} title="INFORMATIONS"><Informations /></Frame>
      <Frame x={528} y={358} title="CATEGORIES"><Catalogue /></Frame>
      <Frame x={689} y={358} title="HOME" kind="home"><Catalogue /></Frame>
      <Frame x={850} y={358} title="CONNEXION"><Login /></Frame>
      <Frame x={1011} y={358} title="SUBSCRIBE"><Subscribe /></Frame>
      <Frame x={552} y={557} title="CGV"><Txt x={58.5} y={33.3} s={4}>CGV</Txt></Frame>
      <Frame x={700} y={557} title="CONTACT"><Contact /></Frame>
      <Frame x={850} y={557} title="FAQ" kind="faq"><Txt x={57} y={33.3} s={4}>FAQ</Txt></Frame>
      <Connectors />
      <ToolPanel />
      <Controls />
    </main>
  );
}

/* ---------- downloads bar ---------- */

function Download({ name, pl, w, tw }: { name: string; pl: string; w: string; tw: string }) {
  return (
    <div className={`flex h-9 items-center border-r border-[#6a6d70] ${pl} ${w}`}>
      <svg viewBox="0 0 16 14" className="mb-[3px] h-[14px] w-4"><rect width="16" height="14" fill="#d9d9d9" /><rect x="1.5" y="1.5" width="13" height="11" fill="#1d1d1d" /><path d="M3 3H13L3 11Z" fill="#6d6d6d" /><path d="M13 3V11H3Z" fill="#484848" /></svg>
      <span className={`ml-[13px] pt-[2px] ${tw} tracking-[0.25px] whitespace-nowrap`}>{name}</span>
      <svg viewBox="0 0 10 6" className="ml-[15px] h-[6px] w-[10px]" fill="none" stroke="#b4b7ba" strokeWidth="1.7"><path d="M1 5.3L5 1.3L9 5.3" /></svg>
    </div>
  );
}

function DownloadsBar() {
  return (
    <footer className={`flex h-[49px] shrink-0 items-center border-t border-[#1e2022] bg-[#323639] text-[15px] text-[#eceef0] ${ubuntu}`}>
      <Download name="abstract-art-b….jpg" pl="pl-5" w="w-[231px]" tw="w-[138px]" />
      <Download name="architecture-….jpg" pl="pl-4" w="w-[227px]" tw="w-[138px]" />
      <button className="mt-[-2px] mr-[13px] ml-auto flex h-8 w-[122px] items-center justify-center rounded-[4px] border border-[#dadce0] bg-[#3c4043] text-[14px] font-semibold whitespace-nowrap tracking-[0.25px]">Tout afficher</button>
      <Cross className="mb-[2px] mr-[13px] h-[10px] w-[10px] text-[#b4b7ba]" />
    </footer>
  );
}

export default function App() {
  return (
    <div className="flex h-[768px] w-[1366px] flex-col overflow-hidden bg-[#323639]">
      <TopBar />
      <div className="flex min-h-0 flex-1">
        <Dock />
        <div className="flex min-w-0 flex-1 flex-col">
          <TabStrip />
          <AddressBar />
          <AppHeader />
          <Canvas />
          <DownloadsBar />
        </div>
      </div>
    </div>
  );
}
